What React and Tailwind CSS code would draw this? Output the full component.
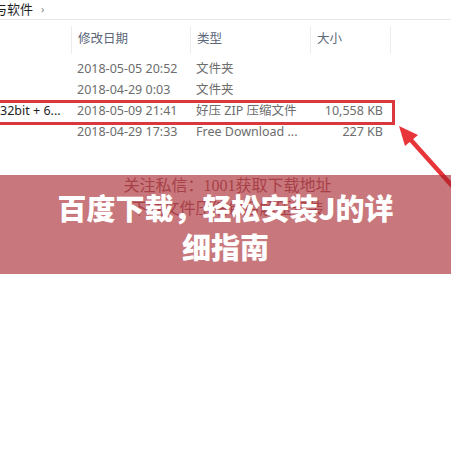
import React from "react";

const rows = [
  { name: "", date: "2018-05-05 20:52", type: "文件夹", size: "" },
  { name: "", date: "2018-04-29 0:03", type: "文件夹", size: "" },
  { name: "32bit + 6...", date: "2018-05-09 21:41", type: "好压 ZIP 压缩文件", size: "10,558 KB" },
  { name: "", date: "2018-04-29 17:33", type: "Free Download ...", size: "227 KB" },
];

export default function App() {
  const ff = { fontFamily: '"Noto Sans", "Noto Sans CJK SC", sans-serif' };
  return (
    <div className="relative w-[451px] h-[451px] overflow-hidden bg-white" style={ff}>
      {/* breadcrumb */}
      <div className="h-[20px] border-b border-[#e6e6e6] flex items-center text-[13px] text-[#1f1f1f]">
        <span className="ml-[-6px]">与软件</span>
        <span className="ml-[8px] text-[11px] text-[#8a8a8a]">›</span>
      </div>
      {/* header */}
      <div className="flex h-[39px] items-center text-[12.5px] text-[#5b6678]">
        <div className="w-[71px]" />
        <div className="w-[119px] h-[28px] border-l border-[#ececec] pl-[6px] flex items-center">修改日期</div>
        <div className="w-[120px] h-[28px] border-l border-[#ececec] pl-[6px] flex items-center">类型</div>
        <div className="w-[80px] h-[28px] border-l border-[#ececec] pl-[6px] flex items-center">大小</div>
        <div className="w-[20px] h-[28px] border-l border-[#ececec]" />
      </div>
      {/* rows */}
      <div className="flex flex-col text-[12.5px] text-[#6d6d6d]">
        {rows.map((r, i) => (
          <div key={i} className="flex h-[21px] items-center">
            <div className="w-[71px] text-[#1e1e1e] whitespace-nowrap">{r.name}</div>
            <div className="w-[119px] pl-[6px] whitespace-nowrap">{r.date}</div>
            <div className="w-[120px] pl-[6px] whitespace-nowrap">{r.type}</div>
            <div className="w-[73px] text-right whitespace-nowrap">{r.size}</div>
          </div>
        ))}
      </div>
      {/* faint watermark text under banner */}
      <div
        className="mt-[31px] flex flex-col items-center text-[16px] leading-[23px] text-[#b0757d] pl-[4px]"
        style={{ fontFamily: '"Liberation Serif", "Noto Sans CJK SC", serif' }}
      >
        <div>关注私信：1001获取下载地址</div>
        <div>下载文件压缩包后解压安装</div>
      </div>

      {/* red highlight box */}
      <div className="absolute left-[-4px] top-[100px] w-[399px] h-[25px] border-[3px] border-[#d9393e]" />
      {/* arrow */}
      <svg className="absolute left-0 top-0" width="451" height="451" viewBox="0 0 451 451">
        <line x1="462" y1="197" x2="410" y2="139" stroke="#e8353a" strokeWidth="4.5" />
        <polygon points="399,126 418,135 405,146" fill="#e8353a" />
      </svg>

      {/* banner overlay */}
      <div className="absolute left-0 top-[175px] w-[451px] h-[99px] bg-[rgba(163,28,37,0.6)] flex justify-center pt-[13px]">
        <div
          className="w-[350px] text-center text-white text-[29px] leading-[39px] font-black"
          style={{ fontFamily: '"Noto Sans CJK SC", sans-serif' }}
        >
          百度下载，轻松安装J的详细指南
        </div>
      </div>
    </div>
  );
}
